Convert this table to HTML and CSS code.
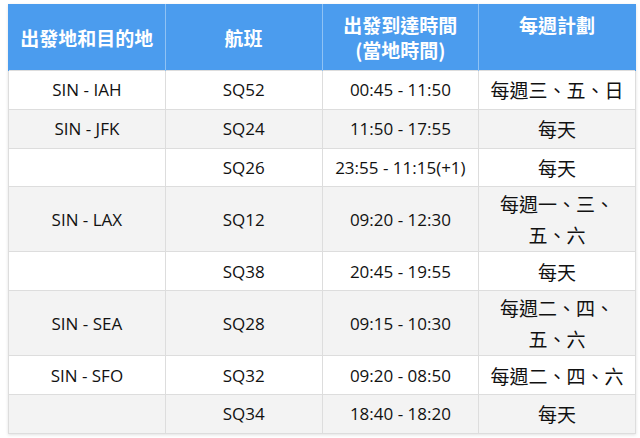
FILE: index.html
```html
<!DOCTYPE html>
<html lang="zh-Hant">
<head>
<meta charset="utf-8">
<title>航班時間表</title>
<link rel="stylesheet" href="styles.css">
</head>
<body>
<div class="wrap">
<table class="sched">
  <colgroup><col><col><col><col></colgroup>
  <thead>
    <tr>
      <th>出發地和目的地</th>
      <th>航班</th>
      <th>出發到達時間<br>(當地時間)</th>
      <th class="top">每週計劃</th>
    </tr>
  </thead>
  <tbody>
    <tr><td>SIN - IAH</td><td>SQ52</td><td>00:45 - 11:50</td><td class="zh">每週三、五、日</td></tr>
    <tr class="alt"><td>SIN - JFK</td><td>SQ24</td><td>11:50 - 17:55</td><td class="zh">每天</td></tr>
    <tr><td></td><td>SQ26</td><td>23:55 - 11:15(+1)</td><td class="zh">每天</td></tr>
    <tr class="alt"><td>SIN - LAX</td><td>SQ12</td><td>09:20 - 12:30</td><td class="zh">每週一、三、<br>五、六</td></tr>
    <tr><td></td><td>SQ38</td><td>20:45 - 19:55</td><td class="zh">每天</td></tr>
    <tr class="alt"><td>SIN - SEA</td><td>SQ28</td><td>09:15 - 10:30</td><td class="zh">每週二、四、<br>五、六</td></tr>
    <tr><td>SIN - SFO</td><td>SQ32</td><td>09:20 - 08:50</td><td class="zh">每週二、四、六</td></tr>
    <tr class="alt"><td></td><td>SQ34</td><td>18:40 - 18:20</td><td class="zh">每天</td></tr>
  </tbody>
</table>
</div>
</body>
</html>
```

FILE: styles.css
```css
html, body {
  margin: 0;
  padding: 0;
  background: #ffffff;
}

.wrap {
  padding: 4px 4px 4px 8px;
}

.sched {
  width: 628px;
  table-layout: fixed;
  border-collapse: collapse;
  font-family: "Open Sans", "Noto Sans CJK TC", sans-serif;
  font-size: 17px;
  color: #111111;
  box-shadow: 0 1px 3px rgba(0, 0, 0, 0.12);
}

.sched col {
  width: 25%;
}

.sched th {
  background: #4b9cee;
  color: #ffffff;
  font-family: "Noto Sans CJK TC", sans-serif;
  font-size: 19px;
  font-weight: 700;
  line-height: 25px;
  padding: 8px 4px;
  height: 50px;
  text-align: center;
  vertical-align: middle;
  border-left: 1px solid #8fc2f4;
  border-right: 1px solid #8fc2f4;
}

.sched th:first-child {
  border-left: 1px solid #4b9cee;
}

.sched th:last-child {
  border-right: 1px solid #4b9cee;
}

.sched th.top {
  vertical-align: top;
}

.sched tbody tr {
  height: 38.8px;
}

.sched td {
  border: 1px solid #dddddd;
  text-align: center;
  vertical-align: middle;
  padding: 1px 4px;
  line-height: 31px;
  white-space: nowrap;
}

.sched td.zh {
  font-family: "Noto Sans CJK TC", sans-serif;
  font-size: 19px;
}

.sched tr.alt td {
  background: #f3f3f3;
}
```
